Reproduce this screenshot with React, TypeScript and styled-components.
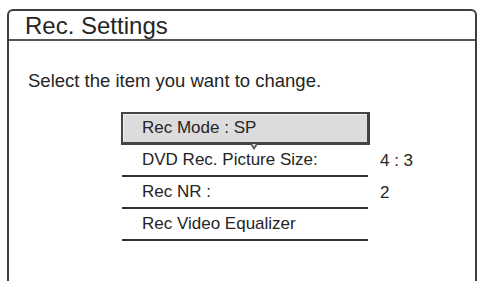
import React from "react";
import styled, { createGlobalStyle } from "styled-components";

const GlobalStyle = createGlobalStyle`
  html, body {
    margin: 0;
    padding: 0;
    background: #fff;
  }
  body {
    width: 482px;
    height: 281px;
    overflow: hidden;
    font-family: "Liberation Sans", Arial, sans-serif;
    color: #252525;
  }
`;

const Screen = styled.div`
  height: 281px;
  padding: 9px 5px 0 7px;
  box-sizing: border-box;
  display: flex;
`;

const Frame = styled.div`
  flex: 1;
  display: flex;
  flex-direction: column;
  border: 2px solid #3e3e3e;
  border-bottom: none;
  border-radius: 6px 6px 0 0;
`;

const TitleBar = styled.div`
  height: 27px;
  padding-left: 16px;
  border-bottom: 2px solid #555;
  display: flex;
  align-items: center;
  font-size: 24px;
  line-height: 1;
  padding-top: 1px;
  box-sizing: content-box;
`;

const Body = styled.div`
  padding: 29px 0 0 19px;
  display: flex;
  flex-direction: column;
`;

const Prompt = styled.p`
  margin: 0;
  font-size: 18.5px;
  line-height: 21px;
`;

const Menu = styled.div`
  margin: 21px 0 0 93px;
  display: grid;
  grid-template-columns: 249px auto;
  column-gap: 10px;
  align-items: center;
`;

const Item = styled.div<{ $selected?: boolean }>`
  position: relative;
  height: 32px;
  box-sizing: border-box;
  display: flex;
  align-items: center;
  padding-left: ${(p) => (p.$selected ? "19px" : "20px")};
  font-size: 17px;
  ${(p) =>
    p.$selected
      ? `
    height: 33px;
    background: #dcdcdc;
    border: 2px solid #444;
    border-right-width: 3px;
    border-bottom-width: 3px;
    box-shadow: inset 1px 1px 0 #f2f2f2;
  `
      : `
    margin: 0 2px 0 1px;
    border-bottom: 2px solid #333;
  `}
`;

/* little down-pointing tab under the highlighted row */
const Pointer = styled.span`
  position: absolute;
  left: 127px;
  bottom: -8px;
  width: 0;
  height: 0;
  border-left: 4px solid transparent;
  border-right: 4px solid transparent;
  border-top: 6px solid #555;

  &::after {
    content: "";
    position: absolute;
    left: -2px;
    top: -6px;
    border-left: 2px solid transparent;
    border-right: 2px solid transparent;
    border-top: 3px solid #d6d6d6;
  }
`;

const Value = styled.div`
  font-size: 17px;
  align-self: center;
`;

const items = [
  { label: "Rec Mode : SP", value: "", selected: true },
  { label: "DVD Rec. Picture Size:", value: "4 : 3" },
  { label: "Rec NR :", value: "2" },
  { label: "Rec Video Equalizer", value: "" },
];

export default function App() {
  return (
    <>
      <GlobalStyle />
      <Screen>
        <Frame>
          <TitleBar>Rec. Settings</TitleBar>
          <Body>
            <Prompt>Select the item you want to change.</Prompt>
            <Menu>
              {items.map((it) => (
                <React.Fragment key={it.label}>
                  <Item $selected={it.selected}>
                    {it.label}
                    {it.selected && <Pointer />}
                  </Item>
                  <Value>{it.value}</Value>
                </React.Fragment>
              ))}
            </Menu>
          </Body>
        </Frame>
      </Screen>
    </>
  );
}
